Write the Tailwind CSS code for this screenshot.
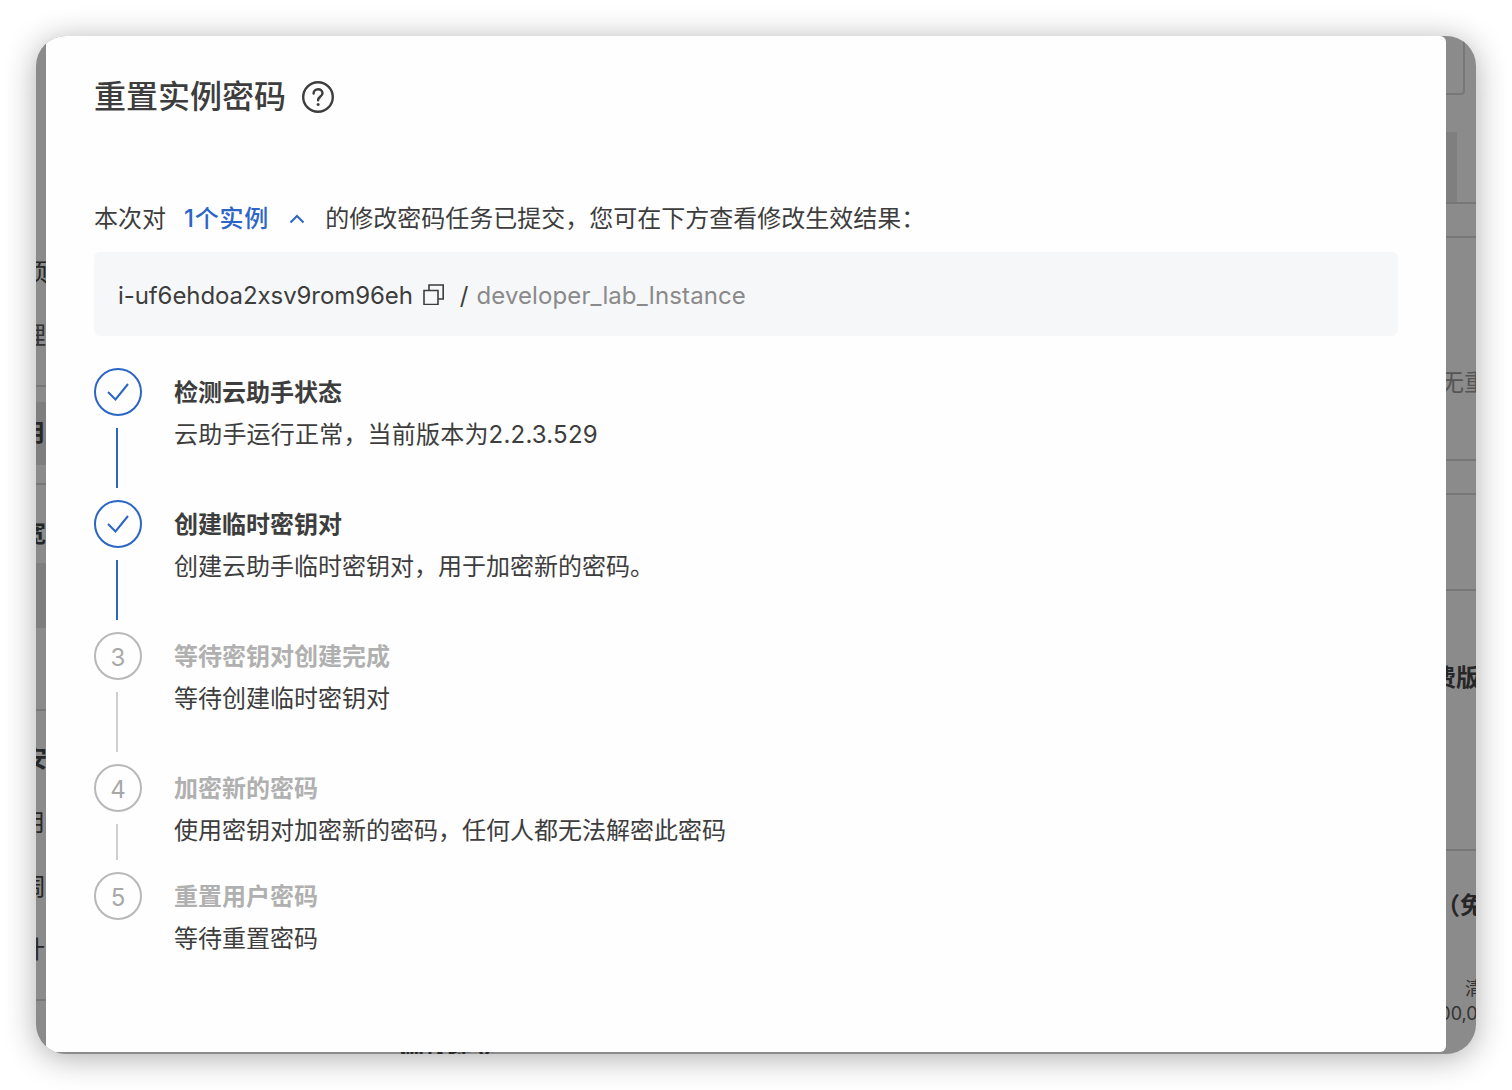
<!DOCTYPE html>
<html lang="zh-CN">
<head>
    <meta charset="UTF-8">
    <meta name="viewport" content="width=device-width, initial-scale=1.0">
    <title>重置实例密码</title>
    <script src="https://cdn.jsdelivr.net/npm/@tailwindcss/browser@4"></script>
</head>
<body class="bg-white h-[1090px] w-[1512px] overflow-hidden pt-[36px] pl-[36px] font-['Inter','Noto_Sans_CJK_SC',sans-serif] text-[#3d3d3d]">
    <!-- window -->
    <div class="relative w-[1440px] h-[1018px] rounded-[30px] overflow-hidden bg-[#8b8b8b] shadow-[0_4px_32px_rgba(0,0,0,0.32)]">
        <!-- dimmed page behind the dialog -->
        <div class="absolute inset-0 text-[24px] leading-[24px] text-[#262626] whitespace-nowrap">
            <div class="absolute left-0 w-[10px] top-[349px] h-[2px] bg-[#777]"></div>
            <div class="absolute left-0 w-[10px] top-[447px] h-[2px] bg-[#777]"></div>
            <div class="absolute left-0 w-[10px] top-[673px] h-[2px] bg-[#777]"></div>
            <div class="absolute left-0 w-[10px] top-[963px] h-[2px] bg-[#777]"></div>
            <div class="absolute left-0 w-[10px] top-[366px] h-[63px] bg-[#7e7e7e]"></div>
            <div class="absolute left-0 w-[10px] top-[527px] h-[65px] bg-[#7e7e7e]"></div>
            <span class="absolute left-[-12px] top-[225px]">项云</span>
            <span class="absolute left-[-14px] top-[288px] text-[#333]">理</span>
            <span class="absolute left-[-15px] top-[385px] font-semibold">用</span>
            <span class="absolute left-[-14px] top-[486px] font-semibold">宽值</span>
            <span class="absolute left-[-13px] top-[711px] font-semibold">安全</span>
            <span class="absolute left-[-15px] top-[775px]">用</span>
            <span class="absolute left-[-14px] top-[839px]">周一</span>
            <span class="absolute left-[-15px] top-[902px]">计</span>

            <div class="absolute left-[1380px] top-[-10px] w-[49px] h-[69px] rounded-[4px] border-2 border-[#777]"></div>
            <div class="absolute left-[1410px] top-[96px] w-[11px] h-[71px] bg-[#7f7f7f]"></div>
            <div class="absolute left-[1410px] w-[30px] top-[166px] h-[2px] bg-[#777]"></div>
            <div class="absolute left-[1410px] w-[30px] top-[200px] h-[2px] bg-[#777]"></div>
            <div class="absolute left-[1410px] w-[30px] top-[423px] h-[2px] bg-[#777]"></div>
            <div class="absolute left-[1410px] w-[30px] top-[457px] h-[2px] bg-[#777]"></div>
            <div class="absolute left-[1410px] w-[30px] top-[553px] h-[2px] bg-[#777]"></div>
            <div class="absolute left-[1410px] w-[30px] top-[813px] h-[2px] bg-[#777]"></div>
            <span class="absolute left-[1404px] top-[335px] text-[#555]">无重</span>
            <span class="absolute left-[1396px] top-[630px] font-semibold">费版</span>
            <span class="absolute left-[1400px] top-[858px] font-semibold">（免</span>
            <span class="absolute left-[1429px] top-[941px] text-[18px] text-[#333]">清</span>
            <span class="absolute left-[1392px] top-[966px] text-[18px] text-[#333]">000,000</span>
            <span class="absolute left-[364px] top-[1004px] font-semibold">确认提交</span>
        </div>

        <!-- dialog -->
        <div class="relative ml-[10px] w-[1400px] h-[1016px] rounded-[6px] bg-[#fefefe] pl-[48px] pr-[48px] pt-[39px]">
            <div class="flex items-center h-[44px]">
                <h1 class="text-[32px] leading-[44px] font-medium">重置实例密码</h1>
                <svg class="ml-[16px] w-[32px] h-[32px]" viewBox="0 0 32 32" fill="none" stroke="#3d3d3d" stroke-width="2.4">
                    <circle cx="16" cy="16" r="14.8"/>
                    <path d="M11.6 12.6c0-2.600 2-4.400 4.500-4.400s4.400 1.700 4.400 4c0 3.400-4.400 3.300-4.400 7" stroke-linecap="round"/>
                    <circle cx="16.1" cy="23.4" r="1.500" fill="#3d3d3d" stroke="none"/>
                </svg>
            </div>

            <div class="mt-[82px] flex items-center h-[36px] text-[24px] leading-[36px]">
                <span>本次对</span>
                <span class="ml-[18px] text-[#2b65c5] font-medium tracking-[0.8px]">1个实例</span>
                <svg class="ml-[20px] w-[16px] h-[10px]" viewBox="0 0 16 10" fill="none" stroke="#2b65c5" stroke-width="2"><path d="M1.500 8.500 8 2l6.500 6.500"/></svg>
                <span class="ml-[20px]">的修改密码任务已提交，您可在下方查看修改生效结果：</span>
            </div>

            <div class="mt-[15px] h-[84px] rounded-[6px] bg-[#f6f7f9] pl-[24px] pt-[3px] flex items-center text-[24px]">
                <span class="tracking-[-0.08px]">i-uf6ehdoa2xsv9rom96eh</span>
                <svg class="ml-[10px] mb-[3px] w-[21px] h-[21px]" viewBox="0 0 21 21" fill="none" stroke="#3d3d3d" stroke-width="1.600"><path d="M1 6.500h14v14H1zM6 6.500V1h14.200v14H15"/></svg>
                <span class="ml-[16px]">/</span>
                <span class="ml-[8px] text-[#8a8a8a] tracking-[0.1px]">developer_lab_Instance</span>
            </div>

            <div class="mt-[32px]">
                <!-- step 1 -->
                <div class="flex">
                    <div class="w-[48px]">
                        <div class="w-[48px] h-[48px] rounded-full border-2 border-[#2b65c5] flex items-center justify-center">
                            <svg class="w-[24px] h-[20px]" viewBox="0 0 24 20" fill="none" stroke="#2b65c5" stroke-width="2"><path d="M2 10l7.500 7.500L22 2"/></svg>
                        </div>
                        <div class="mt-[12px] ml-[22px] w-[2px] h-[60px] bg-[#2b65c5]"></div>
                    </div>
                    <div class="ml-[32px] pt-[1px]">
                        <div class="text-[24px] leading-[48px] font-semibold">检测云助手状态</div>
                        <div class="text-[24px] leading-[36px] tracking-[0.2px]">云助手运行正常，当前版本为2.2.3.529</div>
                    </div>
                </div>
                <!-- step 2 -->
                <div class="flex mt-[12px]">
                    <div class="w-[48px]">
                        <div class="w-[48px] h-[48px] rounded-full border-2 border-[#2b65c5] flex items-center justify-center">
                            <svg class="w-[24px] h-[20px]" viewBox="0 0 24 20" fill="none" stroke="#2b65c5" stroke-width="2"><path d="M2 10l7.500 7.500L22 2"/></svg>
                        </div>
                        <div class="mt-[12px] ml-[22px] w-[2px] h-[60px] bg-[#2b65c5]"></div>
                    </div>
                    <div class="ml-[32px] pt-[1px]">
                        <div class="text-[24px] leading-[48px] font-semibold">创建临时密钥对</div>
                        <div class="text-[24px] leading-[36px]">创建云助手临时密钥对，用于加密新的密码。</div>
                    </div>
                </div>
                <!-- step 3 -->
                <div class="flex mt-[12px]">
                    <div class="w-[48px]">
                        <div class="w-[48px] h-[48px] rounded-full border-2 border-[#b8b8b8] pt-[3px] flex items-center justify-center text-[24px] text-[#a8a8a8]">3</div>
                        <div class="mt-[12px] ml-[22px] w-[2px] h-[60px] bg-[#cfcfcf]"></div>
                    </div>
                    <div class="ml-[32px] pt-[1px]">
                        <div class="text-[24px] leading-[48px] font-semibold text-[#b0b0b0]">等待密钥对创建完成</div>
                        <div class="text-[24px] leading-[36px]">等待创建临时密钥对</div>
                    </div>
                </div>
                <!-- step 4 -->
                <div class="flex mt-[12px]">
                    <div class="w-[48px]">
                        <div class="w-[48px] h-[48px] rounded-full border-2 border-[#b8b8b8] pt-[3px] flex items-center justify-center text-[24px] text-[#a8a8a8]">4</div>
                        <div class="mt-[12px] ml-[22px] w-[2px] h-[36px] bg-[#cfcfcf]"></div>
                    </div>
                    <div class="ml-[32px] pt-[1px]">
                        <div class="text-[24px] leading-[48px] font-semibold text-[#b0b0b0]">加密新的密码</div>
                        <div class="text-[24px] leading-[36px]">使用密钥对加密新的密码，任何人都无法解密此密码</div>
                    </div>
                </div>
                <!-- step 5 -->
                <div class="flex mt-[12px]">
                    <div class="w-[48px]">
                        <div class="w-[48px] h-[48px] rounded-full border-2 border-[#b8b8b8] pt-[3px] flex items-center justify-center text-[24px] text-[#a8a8a8]">5</div>
                    </div>
                    <div class="ml-[32px] pt-[1px]">
                        <div class="text-[24px] leading-[48px] font-semibold text-[#b0b0b0]">重置用户密码</div>
                        <div class="text-[24px] leading-[36px]">等待重置密码</div>
                    </div>
                </div>
            </div>
        </div>
    </div>
</body>
</html>
